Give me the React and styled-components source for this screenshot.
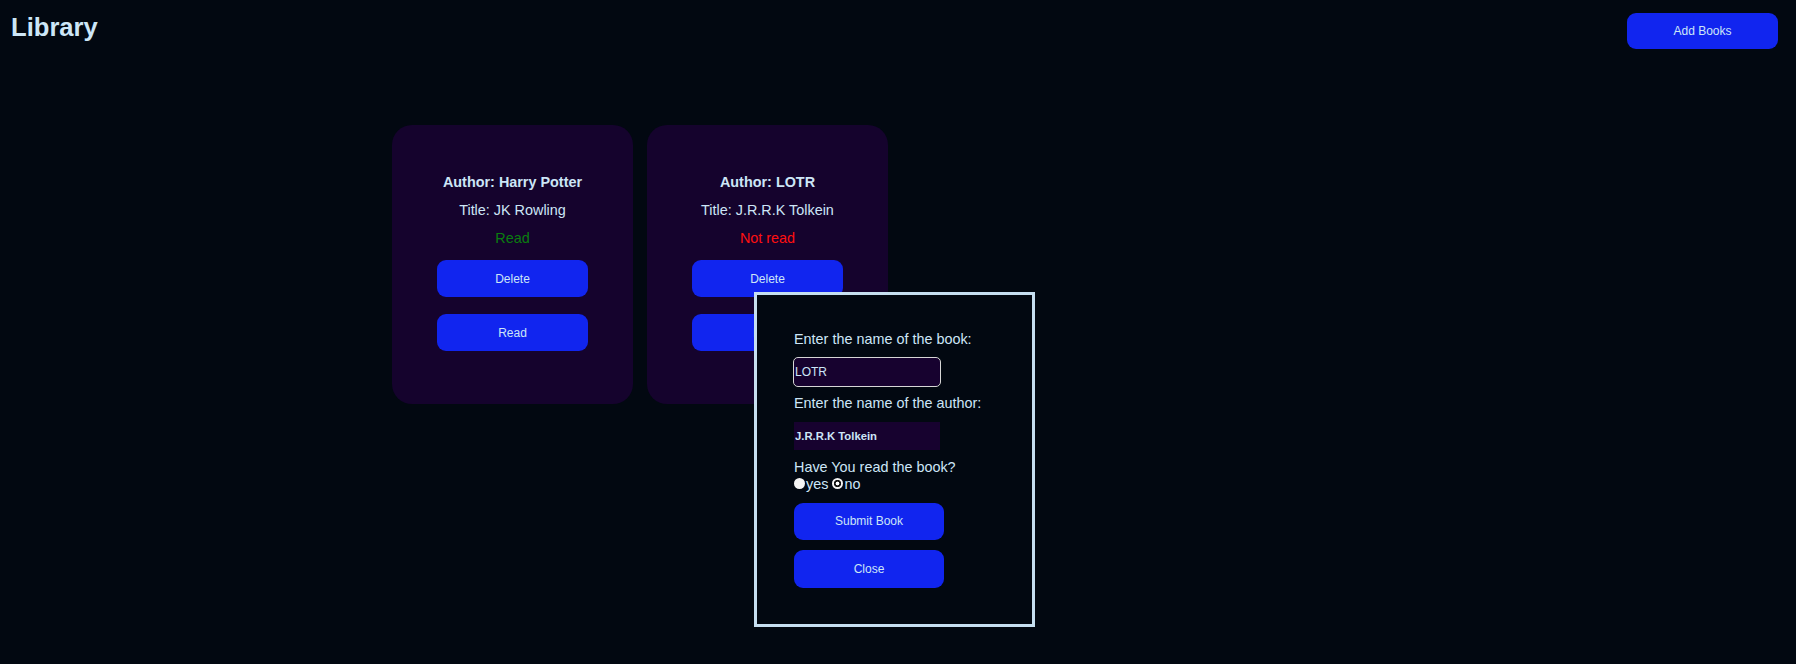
import React from 'react';
import styled, { createGlobalStyle } from 'styled-components';

const GlobalStyle = createGlobalStyle`
  html, body {
    margin: 0;
    padding: 0;
    background: #020811;
    font-family: "Liberation Sans", Arial, sans-serif;
    color: #cde6f7;
  }

  body {
    min-height: 664px;
  }
`;

const Page = styled.div`
  position: relative;
  min-height: 664px;
`;

const Header = styled.header`
  display: flex;
  justify-content: space-between;
  align-items: flex-start;
  padding: 12px 18px 0 11px;
`;

const Heading = styled.h1`
  margin: 0;
  font-size: 25.6px;
  font-weight: bold;
  line-height: 30px;
  color: #cde6f7;
`;

const Button = styled.button`
  width: ${props => props.$width || '151px'};
  height: ${props => props.$height || '37px'};
  margin: 0;
  padding: 0;
  border: none;
  border-radius: 9px;
  background: #1125ef;
  color: #cde6f7;
  font-family: "Liberation Sans", Arial, sans-serif;
  font-size: 12px;
  cursor: pointer;
`;

const AddButton = styled(Button)`
  margin-top: 1px;
`;

const Shelf = styled.main`
  width: 1012px;
  margin: 76px auto 0;
  display: grid;
  grid-template-columns: repeat(4, 241px);
  gap: 14px;
`;

const Card = styled.article`
  display: flex;
  flex-direction: column;
  align-items: center;
  box-sizing: border-box;
  height: 279px;
  padding: 49px 0 53px;
  background: #15032d;
  border-radius: 20px;
`;

const CardLine = styled.p`
  margin: 0 0 11.5px;
  font-size: 14.4px;
  line-height: 16.5px;
  font-weight: ${props => (props.$bold ? 'bold' : 'normal')};
  color: ${props => props.$color || '#cde6f7'};
`;

const Status = styled(CardLine)`
  margin-bottom: 13.5px;
`;

const CardButtons = styled.div`
  display: flex;
  flex-direction: column;
  gap: 17px;
`;

const Modal = styled.form`
  position: absolute;
  left: 754px;
  top: 292px;
  width: 281px;
  height: 335px;
  box-sizing: border-box;
  border: 3px solid #c6dff0;
  background: #020811;
  padding: 36px 0 0 37px;
  display: flex;
  flex-direction: column;
  align-items: flex-start;
`;

const Label = styled.label`
  display: block;
  font-size: 14.4px;
  line-height: 16.5px;
  color: #cde6f7;
`;

const Input = styled.input`
  box-sizing: border-box;
  width: 146px;
  height: 28px;
  margin: 10.5px 0 9px;
  padding: 0 0 0 1px;
  border: none;
  background: #17022f;
  color: #cde6f7;
  font-family: "Liberation Sans", Arial, sans-serif;
  font-size: ${props => (props.$bold ? '11.3px' : '12px')};
  font-weight: ${props => (props.$bold ? 'bold' : 'normal')};
  border-radius: ${props => (props.$focused ? '4px' : '0')};
  outline: ${props => (props.$focused ? '1.5px solid #d6d6d6' : 'none')};
`;

const RadioRow = styled.div`
  display: flex;
  align-items: center;
  font-size: 14.4px;
  line-height: 16px;
  color: #cde6f7;
  margin-bottom: 11px;
`;

const Radio = styled.input.attrs({ type: 'radio' })`
  appearance: none;
  width: 11px;
  height: 11px;
  margin: 0 1px 0 0;
  border-radius: 50%;
  background: ${props =>
    props.checked
      ? 'radial-gradient(circle, #ffffff 0 1.6px, #111111 2.2px 3.4px, #f2f2f2 3.9px)'
      : '#f4f4f4'};
`;

const ModalButtons = styled.div`
  display: flex;
  flex-direction: column;
  gap: 10px;
`;

const books = [
  { author: 'Harry Potter', title: 'JK Rowling', read: true },
  { author: 'LOTR', title: 'J.R.R.K Tolkein', read: false },
];

function BookCard({ book }) {
  return (
    <Card>
      <CardLine $bold>Author: {book.author}</CardLine>
      <CardLine>Title: {book.title}</CardLine>
      <Status $color={book.read ? '#0a7d0f' : '#ff1010'}>
        {book.read ? 'Read' : 'Not read'}
      </Status>
      <CardButtons>
        <Button>Delete</Button>
        <Button>Read</Button>
      </CardButtons>
    </Card>
  );
}

export default function App() {
  return (
    <Page>
      <GlobalStyle />
      <Header>
        <Heading>Library</Heading>
        <AddButton $width="151px" $height="36px">Add Books</AddButton>
      </Header>
      <Shelf>
        {books.map(book => (
          <BookCard key={book.author} book={book} />
        ))}
      </Shelf>
      <Modal onSubmit={e => e.preventDefault()}>
        <Label htmlFor="book">Enter the name of the book:</Label>
        <Input id="book" defaultValue="LOTR" $focused />
        <Label htmlFor="author">Enter the name of the author:</Label>
        <Input id="author" defaultValue="J.R.R.K Tolkein" $bold />
        <Label>Have You read the book?</Label>
        <RadioRow>
          <Radio name="read" readOnly checked={false} />
          yes&nbsp;
          <Radio name="read" readOnly checked />
          no
        </RadioRow>
        <ModalButtons>
          <Button $width="150px">Submit Book</Button>
          <Button $width="150px" $height="38px">Close</Button>
        </ModalButtons>
      </Modal>
    </Page>
  );
}
